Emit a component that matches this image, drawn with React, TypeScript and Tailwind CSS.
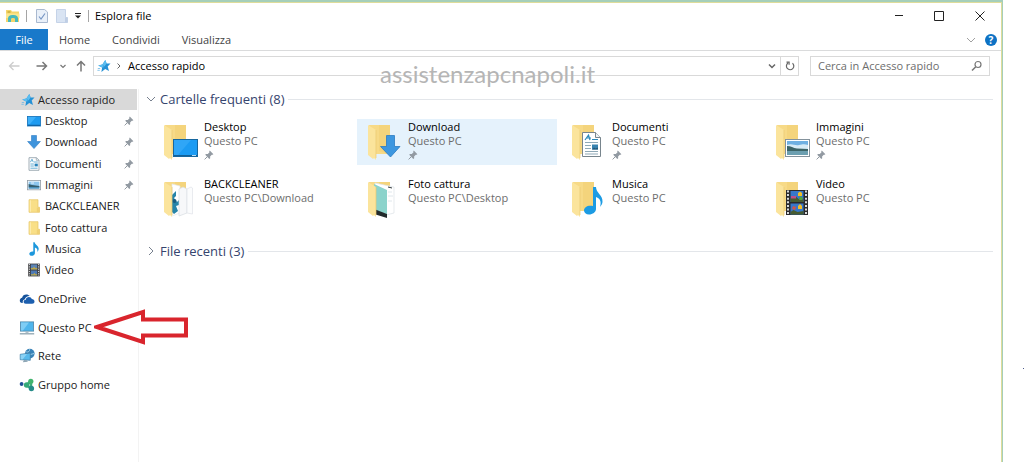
import type { ReactNode } from 'react'
import clsx from 'clsx'

type IconProps = { className?: string }

type NavEntry = {
  label: string
  icon: (props: IconProps) => ReactNode
  pinned?: boolean
}

type Folder = {
  name: string
  path: string
  art: ReactNode
  // papers sit between the back and the front flap, badges lie over both
  inside?: boolean
  pinned?: boolean
  hovered?: boolean
}

function StarIcon({ className }: IconProps) {
  return (
    <svg viewBox="0 0 14 14" className={clsx('size-[14px] shrink-0', className)} aria-hidden>
      <path d="M8.3 1 9.6 4.6l3.900-.2-2.800 3.100 1.300 4.400-3.800-1.900-3.800 3 .7-4.500L1.200 6.400l4.200-.9z" fill="#2491d6" />
      <path d="M8.300 1 9.600 4.600 7.400 7.400 5.400 5.500zM1.200 6.400l4.200-.9 1.500 2.800-1.800.2z" fill="#5bbdf0" />
      <path d="M.8 9.500h2.400M.4 11.300h2.400" stroke="#6fb9e6" strokeWidth=".8" />
    </svg>
  )
}

function DesktopIcon({ className }: IconProps) {
  return (
    <svg viewBox="0 0 14 14" className={clsx('size-[14px] shrink-0', className)} aria-hidden>
      <rect x=".4" y="2.4" width="13.2" height="9.6" fill="#1e9bf0" stroke="#1471b8" strokeWidth=".8" />
      <path d="M1 3h8L3 10H1z" fill="#3db0fa" />
      <path d="M1 11.3h12" stroke="#0f5c99" />
    </svg>
  )
}

function DownloadIcon({ className }: IconProps) {
  return (
    <svg viewBox="0 0 14 14" className={clsx('size-[14px] shrink-0', className)} aria-hidden>
      <path d="M4.5.5h5v6h3.9L7 13.6.6 6.5h3.9z" fill="#3f94dc" stroke="#2d7cc4" strokeWidth=".6" />
    </svg>
  )
}

function DocumentIcon({ className }: IconProps) {
  return (
    <svg viewBox="0 0 14 14" className={clsx('size-[14px] shrink-0', className)} aria-hidden>
      <path d="M2 .7h7.5L12 3.2v10.1H2z" fill="#fff" stroke="#8a9aa5" strokeWidth=".8" />
      <path d="M9.3.7v2.6H12" fill="none" stroke="#8a9aa5" strokeWidth=".7" />
      <path d="M3.4 5.2 5 2.2l1.3 3M7 5h3.8M3.4 7h3.4M3.4 9h3.4M3.4 11.2h7.2" stroke="#55a5cf" strokeWidth=".9" fill="none" />
      <rect x="7.6" y="6.6" width="3.2" height="2.8" fill="#2783ba" />
    </svg>
  )
}

function PictureIcon({ className }: IconProps) {
  return (
    <svg viewBox="0 0 14 14" className={clsx('size-[14px] shrink-0', className)} aria-hidden>
      <rect x=".4" y="2.4" width="13.2" height="9.4" fill="#fff" stroke="#8f9ba5" strokeWidth=".8" />
      <rect x="1.6" y="3.6" width="10.8" height="7" fill="#8dc6ee" />
      <path d="M1.6 6 5 7l7.4 1.1v.9H1.6z" fill="#365f70" />
      <path d="M1.6 9h10.8v1.6H1.6z" fill="#4a90ba" />
      <path d="M4 5h3" stroke="#fff" strokeWidth=".8" />
    </svg>
  )
}

function FolderIcon({ className }: IconProps) {
  return (
    <svg viewBox="0 0 14 14" className={clsx('size-[14px] shrink-0', className)} aria-hidden>
      <path d="M2 .7h9v7.600h1.500v5H2z" fill="#f9df87" stroke="#e5c466" strokeWidth=".7" />
      <path d="M9.800 8.600h2.600v4.500H9.800z" fill="#efd074" />
      <path d="M2.800 1.200h1.100v11.600H2.800z" fill="#fdedb1" />
    </svg>
  )
}

function MusicIcon({ className }: IconProps) {
  return (
    <svg viewBox="0 0 14 14" className={clsx('size-[14px] shrink-0', className)} aria-hidden>
      <path
        d="M6.3.2h1.400c.3 2.800 4.500 3.700 4 7.100-.2 1-.7 1.900-1.500 2.600.6-2.300.1-3.700-2.300-4.500v5.900c0 1.500-1.500 2.500-3.100 2.500-1.600 0-2.500-.8-2.500-2 0-1.500 1.900-2.600 4-2.200z"
        fill="#1c97dc"
      />
    </svg>
  )
}

function VideoIcon({ className }: IconProps) {
  return (
    <svg viewBox="0 0 14 14" className={clsx('size-[14px] shrink-0', className)} aria-hidden>
      <rect x="1.200" y=".6" width="11.600" height="12.800" fill="#3b3b3d" />
      <path d="M2.400 1v12M11.600 1v12" stroke="#dfe2e6" strokeDasharray="1.2 1.1" />
      <rect x="3.800" y="1.400" width="6.400" height="5.100" fill="#5b83b5" />
      <rect x="3.800" y="7.500" width="6.400" height="5.100" fill="#4d79b4" />
      <path d="M4 5h2l1-1.500L8.200 5h2v1.500H4zM4 11.300h2.300l1-1.600 1.200 1.600h1.700v1.300H4z" fill="#b9a64d" />
    </svg>
  )
}

function OneDriveIcon({ className }: IconProps) {
  return (
    <svg viewBox="0 0 16 16" className={clsx('size-4 shrink-0', className)} aria-hidden>
      <path
        d="M1.900 11.800A2.600 2.600 0 0 1 .8 9.400c0-1.300 1-2.400 2.300-2.600C3.500 4.600 5.200 3.400 7.300 3.400c1.500 0 2.700.7 3.500 1.700C8.300 5 6.200 6.300 5.900 8.300 4.200 8.700 3.400 10.200 3.800 11.900z"
        fill="#16539c"
      />
      <path
        d="M6.800 12.800c-1.300 0-2.200-.9-2.200-2 0-1.200 1-2.100 2.200-2.100.2-1.700 1.500-2.700 3.100-2.700 1.400 0 2.500.8 2.900 2.100 1.500 0 2.700 1 2.700 2.400 0 1.300-1 2.300-2.400 2.300z"
        fill="#1c5faf"
      />
    </svg>
  )
}

function ComputerIcon({ className }: IconProps) {
  return (
    <svg viewBox="0 0 16 16" className={clsx('size-4 shrink-0', className)} aria-hidden>
      <rect x="1.4" y="1.9" width="13.2" height="9.2" fill="#4fb5ec" stroke="#4f86a8" strokeWidth=".8" />
      <path d="M2 2.500h8L4 10.500H2z" fill="#7fcdf5" />
      <path d="M6.500 11.500h3v1.300h-3z" fill="#9eb2be" />
      <path d="M.8 13.800h14.400" stroke="#8ea3af" strokeWidth="1.300" />
    </svg>
  )
}

function NetworkIcon({ className }: IconProps) {
  return (
    <svg viewBox="0 0 16 16" className={clsx('size-4 shrink-0', className)} aria-hidden>
      <circle cx="10.800" cy="5.600" r="4.800" fill="#3a83b8" />
      <path d="M7.300 3.800c2 1 3.500-.8 3.400-2.600M9.500 8.500c.5-2.400 3-2.100 5.600-3" stroke="#a2d3ea" fill="none" />
      <path d="M1.200 6.300 11.300 5v7.300L1.200 11.700z" fill="#57b9ec" stroke="#44799d" strokeWidth=".7" />
      <path d="M1.700 6.700 8 5.900l-4.500 5.500-1.800-.1z" fill="#8bd2f5" />
      <path d="m5 12 3 .2.800 1.600-5 .5z" fill="#8ea6b5" />
    </svg>
  )
}

function HomegroupIcon({ className }: IconProps) {
  return (
    <svg viewBox="0 0 16 16" className={clsx('size-4 shrink-0', className)} aria-hidden>
      <path d="M7.500 8 11.500 4.500M7.500 8.500l5 3M12 4.500v7" stroke="#3fae7c" strokeWidth="2.500" />
      <circle cx="2.600" cy="7" r="1.900" fill="#1f4f94" />
      <circle cx="7.600" cy="8" r="2.700" fill="#35a979" />
      <circle cx="11.800" cy="4.300" r="2.600" fill="#41b36d" />
      <circle cx="12.400" cy="11.500" r="2.700" fill="#268c89" />
    </svg>
  )
}

function PinIcon({ className }: IconProps) {
  return (
    <svg viewBox="0 0 10 10" className={clsx('size-[10px] shrink-0', className)} aria-hidden>
      <path d="M5.800.6 9.400 4.200l-.8.600-.8-.1-1.700 1.700.1 1.800-.9.800L1.200 4.800l.8-.9 1.800.1 1.700-1.700-.3-.9z" fill="#929aa2" />
      <path d="M3.500 6.500.6 9.400" stroke="#929aa2" />
    </svg>
  )
}

function Chevron({ direction, className }: IconProps & { direction: 'down' | 'right' }) {
  return (
    <svg viewBox="0 0 10 10" className={clsx('size-[10px] shrink-0', className)} aria-hidden>
      <path d={direction === 'down' ? 'M1 3l4 4 4-4' : 'M3 1l4 4-4 4'} fill="none" stroke="currentColor" />
    </svg>
  )
}

const quickAccess: NavEntry[] = [
  { label: 'Desktop', icon: DesktopIcon, pinned: true },
  { label: 'Download', icon: DownloadIcon, pinned: true },
  { label: 'Documenti', icon: DocumentIcon, pinned: true },
  { label: 'Immagini', icon: PictureIcon, pinned: true },
  { label: 'BACKCLEANER', icon: FolderIcon },
  { label: 'Foto cattura', icon: FolderIcon },
  { label: 'Musica', icon: MusicIcon },
  { label: 'Video', icon: VideoIcon },
]

const locations: NavEntry[] = [
  { label: 'OneDrive', icon: OneDriveIcon },
  { label: 'Questo PC', icon: ComputerIcon },
  { label: 'Rete', icon: NetworkIcon },
  { label: 'Gruppo home', icon: HomegroupIcon },
]

const folders: Folder[] = [
  {
    name: 'Desktop',
    path: 'Questo PC',
    pinned: true,
    art: (
      <>
        <rect x="12.5" y="18.5" width="24" height="17" fill="#1b9bf3" stroke="#16679f" />
        <path d="M13 19h17L17 34h-4z" fill="#2fa6f7" />
        <path d="M13 34.500h23" stroke="#136097" />
        <path d="M31 34.500h4" stroke="#b9dcf2" />
      </>
    ),
  },
  {
    name: 'Download',
    path: 'Questo PC',
    pinned: true,
    hovered: true,
    art: <path d="M21.500 14.500h8v11h5.500L25.500 36 15.500 25.500h6z" fill="#3d97e0" stroke="#2b7bc2" strokeWidth=".8" />,
  },
  {
    name: 'Documenti',
    path: 'Questo PC',
    pinned: true,
    art: (
      <>
        <path d="M13.500 11.500h13l5 5v19h-18z" fill="#fff" stroke="#78858d" />
        <path d="M26.500 11.500v5h5" fill="#eef3f6" stroke="#78858d" />
        <path d="m16 19 3.500-5 1.500 5m-4-2h5M23 18.500h6" fill="none" stroke="#2c8abb" strokeWidth="1.200" />
        <path d="M16 21.500h13M16 24.500h6M16 27.500h6M16 30.500h13M16 33h13" stroke="#8fa9b7" />
        <rect x="23" y="23.500" width="6" height="5" fill="#3983b0" />
        <path d="m23 28.500 2-2 1.500 1 2.500-1v2z" fill="#225878" />
      </>
    ),
  },
  {
    name: 'Immagini',
    path: 'Questo PC',
    pinned: true,
    art: (
      <>
        <rect x="12.500" y="18.500" width="24" height="17" fill="#fff" stroke="#84929c" />
        <rect x="14" y="20" width="21" height="14" fill="#6fb0e2" />
        <path d="M14 24c5-2 8 1 12 0s6-1 9 0v4H14z" fill="#d7ebf6" />
        <path d="M14 25c4 0 6 2 10 2.500l11 .5v2H14z" fill="#3c6467" />
        <path d="M14 30h21v4H14z" fill="#6c9fb0" />
      </>
    ),
  },
  {
    name: 'BACKCLEANER',
    path: 'Questo PC\\Download',
    inside: true,
    art: (
      <>
        <path d="m11 6 8 2v27l-8 3z" fill="#fff" stroke="#e2e6e9" strokeWidth=".7" />
        <path d="m11 17 4-4v5l-2 2 3 4 2-2v5l-3 1 2 5-4 3-2-2z" fill="#2684a9" />
        <circle cx="13.500" cy="23" r="2" fill="#195c80" />
        <path d="m18 11 4-2 4 2v24l-8 3z" fill="#f7f8fa" stroke="#d7dce1" strokeWidth=".7" />
        <path d="m26 11 4-2 1.500 1v26l-5.500-1z" fill="#fbfcfd" stroke="#dfe3e8" strokeWidth=".7" />
      </>
    ),
  },
  {
    name: 'Foto cattura',
    path: 'Questo PC\\Desktop',
    inside: true,
    art: (
      <>
        <path d="m10 5 19 4v26l-8 2-11-3z" fill="#fff" stroke="#dce3e7" strokeWidth=".7" />
        <path d="m9 6 13 6v24L9 33z" fill="#8bd3cb" />
        <path d="m9 31 13 5v4L9 36z" fill="#222a2c" />
        <path d="M23 14h4M23 18h5M23 23h4" stroke="#e0e7ec" />
        <path d="m23 9 4 1" stroke="#333b3e" />
      </>
    ),
  },
  {
    name: 'Musica',
    path: 'Questo PC',
    art: (
      <path
        d="M24 9h3c0 6 7 8 6.500 15-.3 2-1.200 3.500-2.500 5 1.500-5 .5-8.500-4-10v12c0 3-3.300 5.500-7 5.500-3 0-5-1.700-5-4 0-3.400 4-5.800 9-4.500z"
        fill="#1c9be3"
      />
    ),
  },
  {
    name: 'Video',
    path: 'Questo PC',
    art: (
      <>
        <rect x="13" y="12" width="22" height="25" fill="#2a2a2c" />
        <path d="M15 12.500v24M33 12.500v24" stroke="#eceff1" strokeWidth="1.800" strokeDasharray="2 1.6" />
        <rect x="17.500" y="13" width="13" height="11" fill="#3777cb" />
        <rect x="17.500" y="25.500" width="13" height="11" fill="#3777cb" />
        <path d="M17.500 20h3l2-2 3 3 2-1 3 2v2h-13zM17.500 34l3-2 4 2 6-1v3.500h-13z" fill="#475c32" />
        <path d="m25 15 2-1.500 2 1.500v3h-4zM25 28l2-2 2 2v3h-4z" fill="#f1be27" />
        <path d="M18 18h5v2.500h-5z" fill="#bd4e87" />
        <path d="m20 28 3 1-1 3-3-1z" fill="#ce554a" />
        <path d="m27 18 3 2-1 2h-3z" fill="#56a43a" />
      </>
    ),
  },
]

function NavRow({ entry, nested }: { entry: NavEntry; nested?: boolean }) {
  const Icon = entry.icon
  return (
    <li className="flex items-center">
      <a href="#" className={clsx('flex flex-1 items-center', nested ? 'gap-1 pl-[27px]' : 'gap-[3px] pl-[19px]')}>
        <Icon />
        <span>{entry.label}</span>
        {entry.pinned && <PinIcon className="mr-1 ml-auto" />}
      </a>
    </li>
  )
}

function SectionTitle({ title, open }: { title: string; open?: boolean }) {
  return (
    <h2 className="flex h-5 items-center pr-2 text-[13px] text-[#35446e]">
      <button type="button" aria-expanded={!!open} className="flex items-center gap-1">
        <Chevron direction={open ? 'down' : 'right'} className="text-[#77808e]" />
        {title}
      </button>
      <span className="ml-1 h-px flex-1 bg-[#e3e6ea]" />
    </h2>
  )
}

function FolderTile({ folder }: { folder: Folder }) {
  return (
    <li>
      <a href="#" className={clsx('flex h-[46px] gap-[3px] pl-2', folder.hovered && 'bg-[#e5f2fc]')}>
        <svg viewBox="0 0 40 42" className="mt-[2px] h-[42px] w-10 shrink-0" aria-hidden>
          <path d="M4 4h21v29H8z" fill="#f7da87" />
          <path d="M14 4h11v29l-11-3z" fill="#f1cd72" opacity=".5" />
          {folder.inside && folder.art}
          <path d="m3 4 8 5v30l-2-2-1 1-5-4z" fill="#fbe49c" />
          <path d="M11 9v28" stroke="#e9c970" strokeWidth=".7" />
          {!folder.inside && folder.art}
        </svg>
        <span className="flex flex-col pt-px leading-[14px]">
          <span className="text-black">{folder.name}</span>
          <span className="text-[#6d6d6d]">{folder.path}</span>
          {folder.pinned && <PinIcon className="mt-[2px]" />}
        </span>
      </a>
    </li>
  )
}

function TitleBar() {
  return (
    <header className="flex h-[26px] items-center pl-[5px]">
      <svg viewBox="0 0 16 14" className="h-[14px] w-4" aria-hidden>
        <path d="M1 1h5l1 1.500h7V13H1z" fill="#f5d56b" />
        <path d="M2.500 2h3v2h-3z" fill="#d4b747" />
        <path d="M1 4.500h13.500V9H1z" fill="#fbe68f" />
        <path d="M3 13V9.500C3 7.500 4.500 6 7.500 6h1c3 0 4.500 1.500 4.500 3.500V13h-3v-3c0-1-1-1-2-1s-2 0-2 1v3z" fill="#48b9bb" />
      </svg>
      <span className="ml-[5px] h-3 w-px bg-[#a5a5a5]" />
      <button type="button" aria-label="Proprietà" className="ml-[9px]">
        <svg viewBox="0 0 12 14" className="h-[14px] w-3" aria-hidden>
          <path d="M.5.5h8L11.500 3v10.500H.5z" fill="#e9f0f9" stroke="#a9b9d0" />
          <path d="m3 7.500 2 2.500 4-5.500" fill="none" stroke="#7796c4" strokeWidth="1.200" />
        </svg>
      </button>
      <button type="button" aria-label="Nuova cartella" className="ml-2">
        <svg viewBox="0 0 12 14" className="h-[14px] w-3" aria-hidden>
          <path d="M.5.5h9v8h2v5H.5z" fill="#d9e4f3" stroke="#c5d3e8" />
          <path d="M9 8.500h2.500v5H9z" fill="#bfcee5" />
        </svg>
      </button>
      <button type="button" aria-label="Personalizza barra" className="ml-[7px]">
        <svg viewBox="0 0 6 6" className="size-[6px]" aria-hidden>
          <path d="M0 .5h6" stroke="#222" />
          <path d="M0 2.500h6L3 5.500z" fill="#222" />
        </svg>
      </button>
      <span className="ml-[7px] h-3 w-px bg-[#a5a5a5]" />
      <h1 className="ml-[6px] flex-1 text-black">Esplora file</h1>
      <div className="flex text-[#222]">
        <button type="button" aria-label="Riduci a icona" className="flex w-10 justify-center">
          <svg viewBox="0 0 10 10" className="size-[10px]" aria-hidden>
            <path d="M1 4.500h8" stroke="currentColor" />
          </svg>
        </button>
        <button type="button" aria-label="Ingrandisci" className="flex w-10 justify-center">
          <svg viewBox="0 0 10 10" className="size-[10px]" aria-hidden>
            <path d="M.5.5h9v9h-9z" fill="none" stroke="currentColor" />
          </svg>
        </button>
        <button type="button" aria-label="Chiudi" className="flex w-[42px] justify-center">
          <svg viewBox="0 0 10 10" className="size-[10px]" aria-hidden>
            <path d="m.5.5 9 9m0-9-9 9" stroke="currentColor" />
          </svg>
        </button>
      </div>
    </header>
  )
}

function RibbonTabs() {
  return (
    <nav className="flex h-[22px] items-center border-b border-[#dadbdc] text-[#444]">
      <button type="button" className="h-full w-12 bg-[#1979ca] text-white">File</button>
      <div className="ml-[11px] flex gap-[22px]">
        <button type="button">Home</button>
        <button type="button">Condividi</button>
        <button type="button">Visualizza</button>
      </div>
      <button type="button" aria-label="Espandi barra multifunzione" className="ml-auto text-[#a0a0a0]">
        <Chevron direction="down" className="size-2" />
      </button>
      <button
        type="button"
        aria-label="Guida"
        className="mr-1 ml-[9px] flex size-3 items-center justify-center rounded-full bg-[#0d72c4] text-[10px] leading-3 font-bold text-white"
      >
        ?
      </button>
    </nav>
  )
}

function AddressBar() {
  return (
    <div className="mt-[5px] flex h-5 items-center pr-[11px] pl-2">
      <div className="flex w-[85px] items-center text-[#777]">
        <button type="button" aria-label="Indietro" className="text-[#ccc]">
          <svg viewBox="0 0 12 12" className="size-3" aria-hidden>
            <path d="M11.500 6H1.500M5.500 2l-4 4 4 4" fill="none" stroke="currentColor" strokeWidth="1.300" />
          </svg>
        </button>
        <button type="button" aria-label="Avanti" className="ml-4">
          <svg viewBox="0 0 12 12" className="size-3" aria-hidden>
            <path d="M.5 6h10M6.500 2l4 4-4 4" fill="none" stroke="currentColor" strokeWidth="1.500" />
          </svg>
        </button>
        <button type="button" aria-label="Posizioni recenti" className="ml-3">
          <svg viewBox="0 0 6 6" className="size-[6px]" aria-hidden>
            <path d="m.5 2 2.500 2.500L5.500 2" fill="none" stroke="currentColor" strokeWidth="1.200" />
          </svg>
        </button>
        <button type="button" aria-label="Su" className="ml-[9px]">
          <svg viewBox="0 0 12 12" className="size-3" aria-hidden>
            <path d="M6 11.500v-10M2 5.500l4-4 4 4" fill="none" stroke="currentColor" strokeWidth="1.500" />
          </svg>
        </button>
      </div>
      <div className="flex h-full flex-1 items-center border border-[#d9d9d9] pl-[3px] text-black">
        <StarIcon />
        <svg viewBox="0 0 6 6" className="mx-[5px] size-[6px]" aria-hidden>
          <path d="M1.500.5 4 3 1.500 5.500" fill="none" stroke="#666" />
        </svg>
        <a href="#" className="ml-px">Accesso rapido</a>
        <button type="button" aria-label="Percorsi precedenti" className="mr-1 ml-auto text-[#666]">
          <svg viewBox="0 0 8 8" className="size-2" aria-hidden>
            <path d="m1 2.500 3 3 3-3" fill="none" stroke="currentColor" strokeWidth="1.500" />
          </svg>
        </button>
        <button
          type="button"
          aria-label="Aggiorna"
          className="flex h-full w-[18px] items-center justify-center border-l border-[#d9d9d9] text-[#666]"
        >
          <svg viewBox="0 0 10 10" className="size-[10px]" aria-hidden>
            <path d="M7.500 2.200a3.700 3.700 0 1 1-4.500-.2M1.500 1.200h2.600v2.600" fill="none" stroke="currentColor" strokeWidth="1.200" />
          </svg>
        </button>
      </div>
      <form role="search" className="ml-[11px] flex h-full w-[180px] items-center border border-[#d9d9d9] pr-[6px]">
        <input
          type="search"
          aria-label="Cerca in Accesso rapido"
          placeholder="Cerca in Accesso rapido"
          className="w-full min-w-0 pl-[7px] outline-none placeholder:text-[#6d6d6d]"
        />
        <svg viewBox="0 0 12 12" className="size-3 shrink-0" aria-hidden>
          <circle cx="7" cy="4.500" r="3" fill="none" stroke="#777" strokeWidth="1.200" />
          <path d="M4.800 6.700 1 10.500" stroke="#777" strokeWidth="1.500" />
        </svg>
      </form>
    </div>
  )
}

export default function App() {
  return (
    <div className="relative min-h-screen bg-white pr-[21px] font-['Open_Sans',sans-serif] text-[11px] leading-[14px] text-[#222]">
      <div className="flex min-h-screen flex-col border-t-2 border-r border-[#a5cfba]">
        <div className="relative flex flex-1 flex-col border-t border-r border-[#dedc9a]">
          <TitleBar />
          <RibbonTabs />
          <AddressBar />
          <p className="pointer-events-none absolute top-[57px] left-[380px] font-[Lato,sans-serif] text-[24px] leading-[28px] text-[#b5b5b5]">
            assistenzapcnapoli.it
          </p>

          <div className="mt-[13px] flex flex-1">
            <aside className="relative w-[139px] shrink-0 border-r border-[#f3f3f3]">
              <ul className="grid h-[192px] auto-rows-fr">
                <li className="flex w-[137px] items-center bg-[#d9d9d9]">
                  <a href="#" className="flex items-center gap-[3px] pl-[21px]">
                    <StarIcon />
                    Accesso rapido
                  </a>
                </li>
                {quickAccess.map((entry) => (
                  <NavRow key={entry.label} entry={entry} nested />
                ))}
              </ul>
              <ul className="mt-1 grid h-[114px] auto-rows-fr">
                {locations.map((entry) => (
                  <NavRow key={entry.label} entry={entry} />
                ))}
              </ul>
              <svg viewBox="0 0 96 36" className="absolute top-[220px] left-[94px] h-9 w-24" aria-hidden>
                <path d="M3 18 49 3v7.500h43v16H49V33z" fill="#fff" stroke="#d9252d" strokeWidth="4" />
              </svg>
            </aside>

            <main className="min-w-0 flex-1 pl-[7px]">
              <SectionTitle title="Cartelle frequenti (8)" open />
              <ul className="mt-[10px] ml-[7px] grid grid-cols-[repeat(auto-fill,200px)] gap-x-1 gap-y-[11px]">
                {folders.map((folder) => (
                  <FolderTile key={folder.name} folder={folder} />
                ))}
              </ul>
              <div className="mt-[19px]">
                <SectionTitle title="File recenti (3)" />
              </div>
            </main>
          </div>
        </div>
      </div>
      <span className="absolute top-[368px] right-0 size-px bg-[#4d5b8c]" />
    </div>
  )
}
